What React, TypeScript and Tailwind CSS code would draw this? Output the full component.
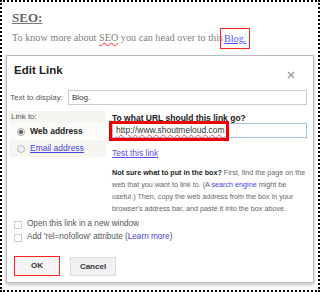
export default function App() {
  return (
    <div className="w-[320px] h-[292px] bg-white overflow-hidden">
      <div className="w-full h-full border-2 border-dotted border-black bg-white px-[4px] pt-[7px]">
        {/* Post content above the dialog */}
        <div className="pl-[6px] font-['Liberation_Serif',serif] text-[#666]">
          <h2 className="text-[13px] font-bold leading-[18px] underline decoration-[#777]">SEO:</h2>
          <p className="mt-[1px] text-[10.2px] leading-[20px] text-[#808080] whitespace-nowrap">
            To know more about <span className="underline decoration-wavy decoration-[#e55]">SEO</span> you can head over to this
            <span className="inline-block align-top border border-[#f22] px-[3px] h-[21px] leading-[20px] text-[#55f] underline -ml-[3px] bg-white/0">Blog.</span>
          </p>
        </div>

        {/* Edit link dialog */}
        <div className="mt-[6px] w-[308px] h-[228px] border border-[#bbb] shadow-[0_2px_4px_rgba(0,0,0,0.25)] bg-white font-['Liberation_Sans',Arial,sans-serif] text-[8px] text-[#333]">
          <div className="flex items-start justify-between h-[26px] pl-[7px] pr-[18px]">
            <span className="mt-[6px] text-[11.5px] font-bold text-[#222]">Edit Link</span>
            <svg width="8" height="8" viewBox="0 0 8 8" className="mt-[15px]">
              <path d="M1 1L7 7M7 1L1 7" stroke="#999" strokeWidth="1.4" />
            </svg>
          </div>

          <div className="flex items-center h-[15px] mt-[8px] pl-[3px]">
            <span className="w-[58px] text-[#555]">Text to display:</span>
            <div className="flex-1 mr-[6px] h-[15px] border border-[#ccc] flex items-center px-[3px] text-[#333]">Blog.</div>
          </div>

          <div className="flex mt-[6px]">
            <div className="w-[97px] ml-[2px] h-[46px] bg-[#f7f5f2]">
              <div className="pl-[2px] h-[12px] flex items-center text-[#555]">Link to:</div>
              <div className="flex items-center h-[17px] pl-[8px] bg-white/60">
                <span className="w-[8px] h-[8px] rounded-full border border-[#aaa] bg-[#eee] flex items-center justify-center">
                  <span className="w-[4px] h-[4px] rounded-full bg-[#555]" />
                </span>
                <span className="ml-[5px] text-[8.5px] font-bold text-[#222]">Web address</span>
              </div>
              <div className="flex items-center h-[17px] pl-[8px]">
                <span className="w-[8px] h-[8px] rounded-full border border-[#bbb] bg-[#eee]" />
                <span className="ml-[5px] text-[8.5px] text-[#44d] underline">Email address</span>
              </div>
            </div>

            <div className="flex-1 pl-[6px] pr-[6px] pt-[2px] text-[8.5px]">
              <div className="font-bold text-[#222] h-[10px] leading-[10px]">To what URL should this link go?</div>
              <div className="relative h-[15px] border border-[#9bc4ee] flex items-center pl-[3px] text-[#333]">
                <span className="underline decoration-wavy decoration-[#e55] decoration-[0.5px]">http://www.shoutmeloud.com</span>
                <span className="absolute left-[-4px] top-[-3px] w-[120px] h-[20px] border-[3px] border-[#e00]" />
              </div>
              <div className="mt-[10px] h-[10px] leading-[10px] text-[#55d] underline">Test this link</div>
              <p className="mt-[9px] leading-[12px] text-[#666] text-[7.2px] whitespace-nowrap">
                <b className="text-[#222]">Not sure what to put in the box?</b> First, find the page on the
                <br />
                web that you want to link to. (A <span className="text-[#44d]">search engine</span> might be
                <br />
                useful.) Then, copy the web address from the box in your
                <br />
                browser's address bar, and paste it into the box above.
              </p>
            </div>
          </div>

          <div className="mt-[3px] pl-[7px] text-[8.2px] text-[#555]">
            <div className="flex items-center h-[13px]">
              <span className="w-[8px] h-[8px] border border-[#ccc]" />
              <span className="ml-[5px]">Open this link in a new window</span>
            </div>
            <div className="flex items-center h-[13px]">
              <span className="w-[8px] h-[8px] border border-[#ccc]" />
              <span className="ml-[5px]">
                Add 'rel=nofollow' attribute (<span className="text-[#44d]">Learn more</span>)
              </span>
            </div>
          </div>

          <div className="flex gap-[10px] mt-[12px] pl-[7px]">
            <div className="w-[46px] h-[20px] border border-[#f22] bg-[#f4f4f4] flex items-center justify-center text-[8px] font-bold text-[#333]">OK</div>
            <div className="w-[46px] h-[19px] mt-[1px] border border-[#ddd] bg-[#f1f1f1] flex items-center justify-center text-[8px] font-bold text-[#333]">Cancel</div>
          </div>
        </div>
      </div>
    </div>
  );
}
